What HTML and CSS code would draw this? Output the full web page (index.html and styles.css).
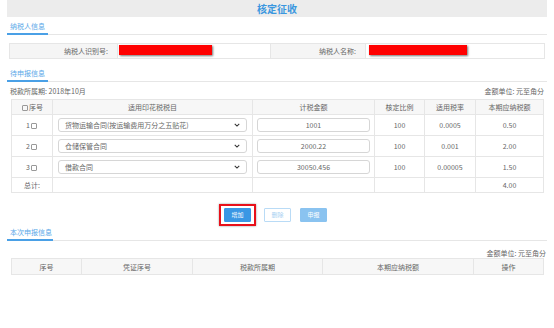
FILE: index.html
```html
<!DOCTYPE html>
<html>
<head>
<meta charset="utf-8">
<link rel="stylesheet" href="styles.css">
</head>
<body>
<div class="page">
  <div class="header">核定征收</div>

  <div class="tab tab1"><span>纳税人信息</span></div>
  <div class="info">
    <div class="lbl w1">纳税人识别号:</div>
    <div class="val w2"><i class="redact r1"></i></div>
    <div class="lbl w3">纳税人名称:</div>
    <div class="val w4"><i class="redact r2"></i></div>
  </div>

  <div class="tab tab2"><span>待申报信息</span></div>
  <div class="meta">
    <span>税款所属期:&nbsp;2018年10月</span>
    <span>金额单位:&nbsp;元至角分</span>
  </div>
  <table class="grid">
    <colgroup>
      <col class="c1"><col class="c2"><col class="c3"><col class="c4"><col class="c5"><col class="c6">
    </colgroup>
    <tr class="head">
      <td><b class="cb"></b>序号</td>
      <td>适用印花税税目</td>
      <td>计税金额</td>
      <td>核定比例</td>
      <td>适用税率</td>
      <td>本期应纳税额</td>
    </tr>
    <tr class="row">
      <td class="num">1<b class="cb"></b></td>
      <td><div class="sel"><span>货物运输合同(按运输费用万分之五贴花)</span><svg viewBox="0 0 8 5" class="chev"><path d="M1 1 L4 4 L7 1" fill="none" stroke="#333" stroke-width="1.4"/></svg></div></td>
      <td><div class="inp">1001</div></td>
      <td>100</td>
      <td>0.0005</td>
      <td>0.50</td>
    </tr>
    <tr class="row">
      <td class="num">2<b class="cb"></b></td>
      <td><div class="sel"><span>仓储保管合同</span><svg viewBox="0 0 8 5" class="chev"><path d="M1 1 L4 4 L7 1" fill="none" stroke="#333" stroke-width="1.4"/></svg></div></td>
      <td><div class="inp">2000.22</div></td>
      <td>100</td>
      <td>0.001</td>
      <td>2.00</td>
    </tr>
    <tr class="row">
      <td class="num">3<b class="cb"></b></td>
      <td><div class="sel"><span>借款合同</span><svg viewBox="0 0 8 5" class="chev"><path d="M1 1 L4 4 L7 1" fill="none" stroke="#333" stroke-width="1.4"/></svg></div></td>
      <td><div class="inp">30050.456</div></td>
      <td>100</td>
      <td>0.00005</td>
      <td>1.50</td>
    </tr>
    <tr class="total">
      <td>总计:</td>
      <td></td>
      <td></td>
      <td></td>
      <td></td>
      <td>4.00</td>
    </tr>
  </table>

  <div class="btns">
    <div class="hl"><button class="btn add">增加</button></div>
    <button class="btn del">删除</button>
    <button class="btn sub">申报</button>
  </div>

  <div class="tab tab3"><span>本次申报信息</span></div>
  <div class="meta meta2">
    <span></span>
    <span>金额单位:&nbsp;元至角分</span>
  </div>
  <table class="grid grid2">
    <colgroup>
      <col class="d1"><col class="d2"><col class="d3"><col class="d4"><col class="d5">
    </colgroup>
    <tr class="head head2">
      <td>序号</td>
      <td>凭证序号</td>
      <td>税款所属期</td>
      <td>本期应纳税额</td>
      <td>操作</td>
    </tr>
  </table>
</div>
</body>
</html>
```

FILE: styles.css
```css
* { box-sizing: border-box; }
html, body { margin: 0; padding: 0; background: #fff; }
body {
  font-family: "Noto Sans CJK SC", "Noto Sans", sans-serif;
  font-size: 7px;
  color: #666;
  width: 554px;
  height: 328px;
  overflow: hidden;
}
.page { padding: 0 7px; }
.header {
  height: 17px;
  line-height: 17px;
  background: #ececec;
  text-align: center;
  color: #3a97df;
  font-size: 10px;
  font-weight: bold;
}
.tab {
  border-bottom: 1px solid #e6e6e6;
  height: 15px;
  display: flex;
  align-items: flex-end;
}
.tab span {
  display: block;
  color: #5aa8e8;
  font-size: 7px;
  line-height: 13px;
  padding: 0 3px;
  border-bottom: 2px solid #4aa0e6;
  margin-bottom: -1px;
  height: 15px;
  white-space: nowrap;
}
.tab1 { margin-top: 3px; width: 100%; }
.tab1 span { width: 41px; }
.tab2 { margin-top: 8px; }
.tab2 span { width: 41px; }
.tab3 { margin-top: 0; }
.tab3 span { width: 46px; }

.info {
  margin: 8px 2px 0 2px;
  display: flex;
  height: 16px;
  border: 1px solid #e6e6e6;
}
.info .lbl {
  background: #f5f5f5;
  text-align: right;
  padding-right: 9px;
  line-height: 14px;
  border-right: 1px solid #e6e6e6;
}
.info .val { position: relative; border-right: 1px solid #e6e6e6; }
.info .val:last-child { border-right: none; }
.w1 { width: 108px; }
.w2 { width: 153px; }
.w3 { width: 95px; }
.w4 { flex: 1; }
.redact {
  position: absolute;
  top: 1px;
  left: 1px;
  height: 10px;
  background: #ff0000;
  box-shadow: 1px 1px 2px rgba(0,0,0,0.55);
}
.r1 { width: 93px; }
.r2 { width: 98px; left: 3px; }

.meta {
  display: flex;
  justify-content: space-between;
  padding: 0 3px;
  margin-top: 4px;
  line-height: 10px;
}
.meta2 { margin-top: 7px; padding-right: 1px; }

.grid {
  margin: 3px 0 0 4px;
  width: 532px;
  border-collapse: collapse;
  table-layout: fixed;
}
.grid td {
  border: 1px solid #e6e6e6;
  text-align: center;
  padding: 0;
  color: #666;
  font-size: 7px;
}
.c1 { width: 41px; }
.c2 { width: 200px; }
.c3 { width: 122px; }
.c4 { width: 50px; }
.c5 { width: 51px; }
.c6 { width: 68px; }
.head td { background: #f7f7f7; height: 15px; }
.row td { height: 21px; }
.total td { height: 15px; }
.cb {
  display: inline-block;
  width: 6px;
  height: 6px;
  border: 1px solid #999;
  border-radius: 1px;
  vertical-align: -1px;
  margin: 0 1px;
}
.sel {
  margin: 0 5px;
  height: 14px;
  border: 1px solid #d6d6d6;
  border-radius: 3px;
  display: flex;
  align-items: center;
  justify-content: space-between;
  padding: 0 6px 0 6px;
  text-align: left;
}
.chev { width: 6px; height: 4px; }
.inp {
  margin: 0 4px;
  height: 14px;
  line-height: 12px;
  border: 1px solid #d6d6d6;
  border-radius: 3px;
}

.btns {
  display: flex;
  justify-content: center;
  align-items: center;
  margin-top: 11px;
  padding-right: 8px;
  gap: 7px;
  height: 22px;
}
.hl {
  border: 2px solid #e8101a;
  padding: 2px 3px;
  box-shadow: 0 0 2px rgba(0,0,0,0.4);
  margin-right: 1px;
}
.btn {
  font-family: inherit;
  font-size: 6px;
  height: 14px;
  width: 27px;
  padding: 0;
  border-radius: 1px;
  border: 1px solid transparent;
  line-height: 12px;
}
.add { background: #3a97e4; color: #fff; border-color: #3a97e4; }
.del { background: #fff; color: #a9d1f2; border-color: #b9dbf6; }
.sub { background: #8ac3f0; color: #fff; border-color: #8ac3f0; margin-left: 2px; }

.grid2 { margin-top: 0; }
.d1 { width: 70px; }
.d2 { width: 111px; }
.d3 { width: 130px; }
.d4 { width: 151px; }
.d5 { width: 70px; }
.head2 td { height: 16px; }
```
